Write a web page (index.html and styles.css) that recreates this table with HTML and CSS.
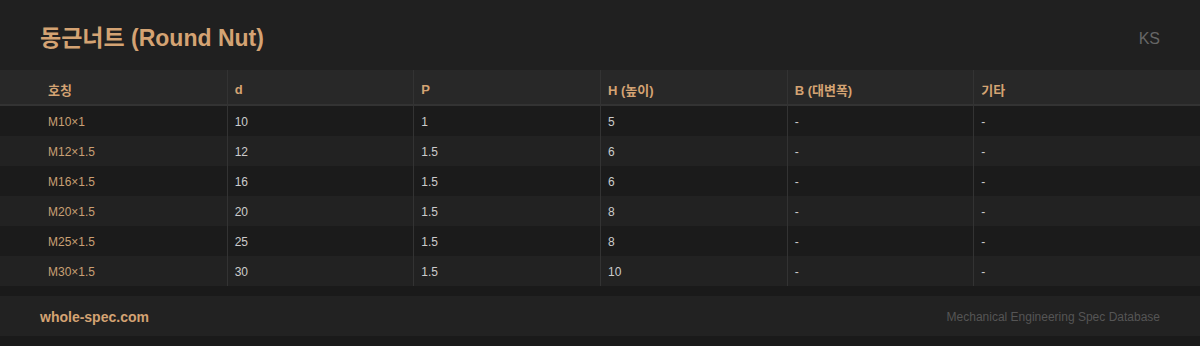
FILE: index.html
```html
<!DOCTYPE html>
<html lang="ko">
<head>
<meta charset="utf-8">
<link rel="stylesheet" href="styles.css">
</head>
<body>
<div class="page">
  <header class="top">
    <h1 class="title">동근너트 (Round Nut)</h1>
    <span class="std">KS</span>
  </header>
  <div class="table">
    <div class="row head">
      <div class="cell">호칭</div><div class="cell">d</div><div class="cell">P</div><div class="cell">H (높이)</div><div class="cell">B (대변폭)</div><div class="cell">기타</div>
    </div>
    <div class="row odd"><div class="cell name">M10×1</div><div class="cell">10</div><div class="cell">1</div><div class="cell">5</div><div class="cell">-</div><div class="cell">-</div></div>
    <div class="row even"><div class="cell name">M12×1.5</div><div class="cell">12</div><div class="cell">1.5</div><div class="cell">6</div><div class="cell">-</div><div class="cell">-</div></div>
    <div class="row odd"><div class="cell name">M16×1.5</div><div class="cell">16</div><div class="cell">1.5</div><div class="cell">6</div><div class="cell">-</div><div class="cell">-</div></div>
    <div class="row even"><div class="cell name">M20×1.5</div><div class="cell">20</div><div class="cell">1.5</div><div class="cell">8</div><div class="cell">-</div><div class="cell">-</div></div>
    <div class="row odd"><div class="cell name">M25×1.5</div><div class="cell">25</div><div class="cell">1.5</div><div class="cell">8</div><div class="cell">-</div><div class="cell">-</div></div>
    <div class="row even"><div class="cell name">M30×1.5</div><div class="cell">30</div><div class="cell">1.5</div><div class="cell">10</div><div class="cell">-</div><div class="cell">-</div></div>
  </div>
  <footer class="foot">
    <span class="site">whole-spec.com</span>
    <span class="tag">Mechanical Engineering Spec Database</span>
  </footer>
</div>
</body>
</html>
```
FILE: styles.css
```css
html, body {
  margin: 0;
  padding: 0;
  background: #1a1a1a;
  font-family: "Liberation Sans", Arial, "Noto Sans CJK KR", sans-serif;
}
.page {
  width: 1200px;
  height: 346px;
  background: #1a1a1a;
}
.top {
  height: 70px;
  background: #202020;
  display: flex;
  align-items: center;
  justify-content: space-between;
  padding: 2px 40px 0;
  box-sizing: border-box;
}
.title {
  margin: 0;
  font-size: 23px;
  font-weight: 700;
  color: #d4a373;
}
.std {
  font-size: 16px;
  color: #666;
  padding-top: 6px;
}
.table {
  display: flex;
  flex-direction: column;
}
.row {
  display: grid;
  grid-template-columns: repeat(6, 1fr);
  padding: 0 40px;
  height: 30px;
  align-items: stretch;
}
.row.head {
  height: 34px;
  background: #282828;
  border-bottom: 2px solid #333;
  color: #d4a373;
  font-weight: 700;
  font-size: 13px;
}
.row.odd { background: #1b1b1b; }
.row.even { background: #222; }
.cell {
  display: flex;
  align-items: center;
  padding: 2px 8px 0 7px;
  font-size: 12px;
  color: #ccc;
  border-left: 1px solid #333;
}
.row.head .cell {
  color: #d4a373;
  font-size: 13px;
  padding-top: 4px;
}
.cell:first-child {
  border-left: none;
  padding-left: 8px;
}
.cell.name { color: #c9a074; }
.foot {
  margin-top: 10px;
  height: 40px;
  background: #222;
  display: flex;
  align-items: center;
  justify-content: space-between;
  padding: 2px 40px 0;
  box-sizing: border-box;
}
.site {
  font-size: 14px;
  font-weight: 700;
  color: #d4a373;
}
.tag {
  font-size: 12px;
  color: #555;
}
```
